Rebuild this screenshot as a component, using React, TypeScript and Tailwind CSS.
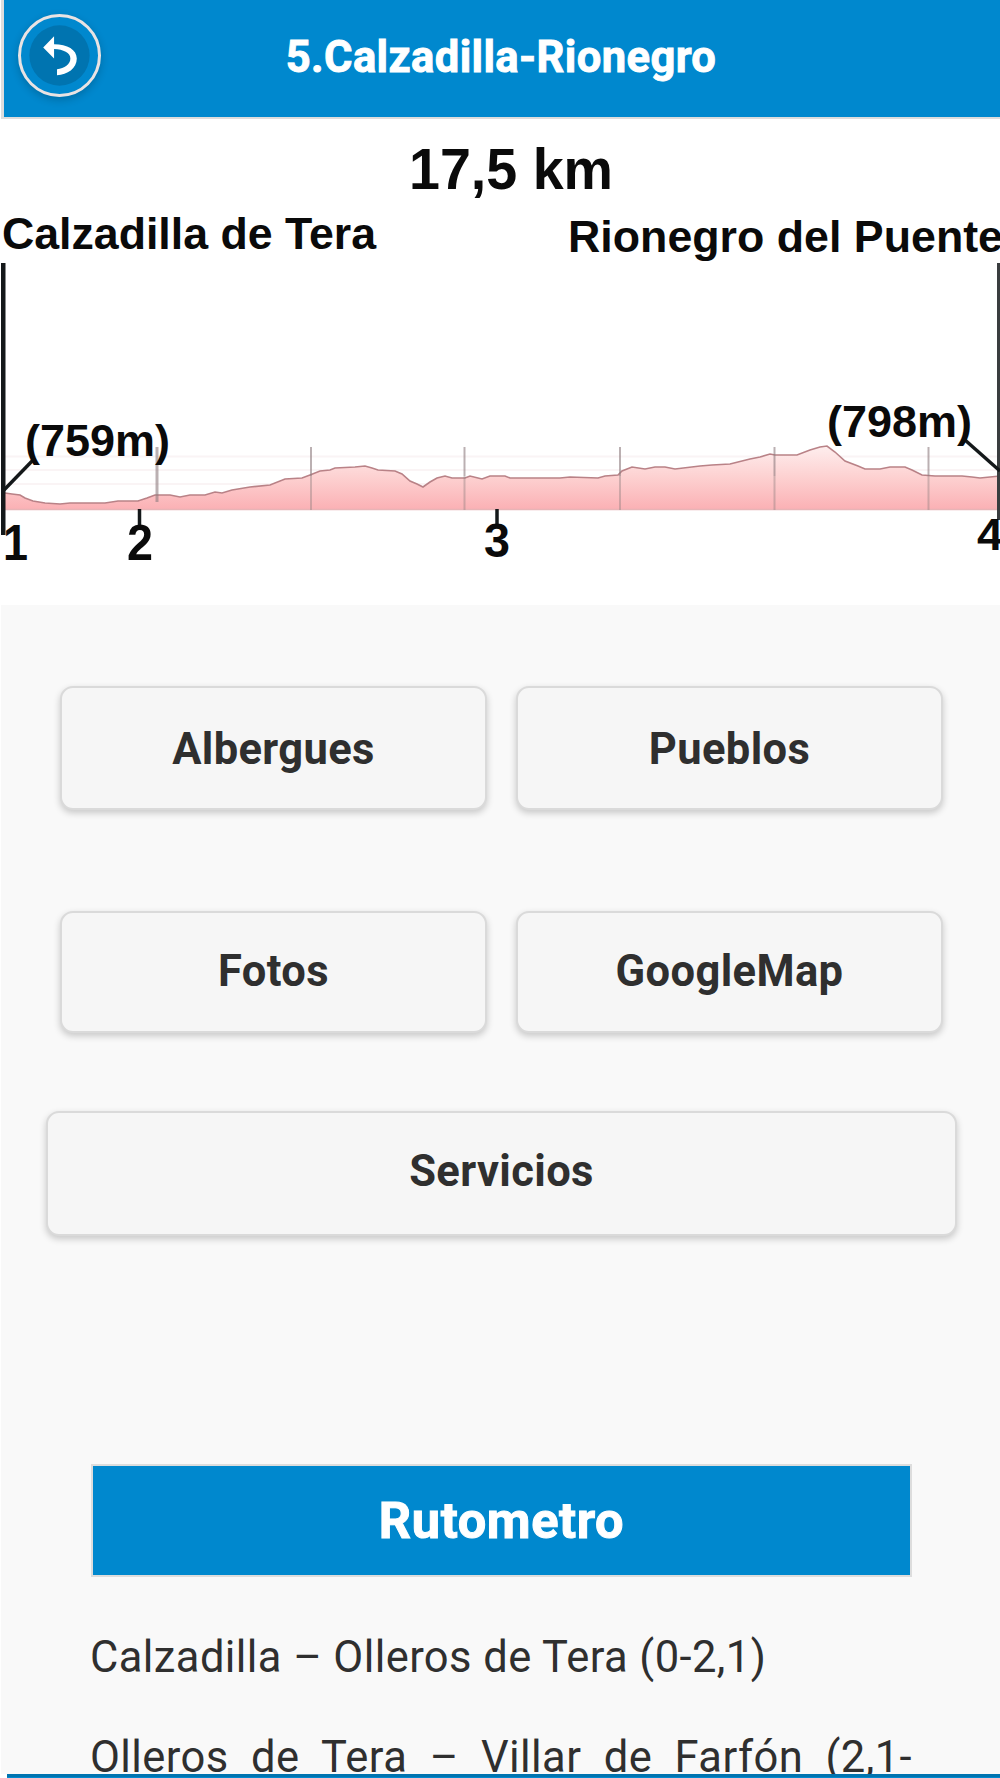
import React from "react";

const profile =
  "5,493 12,494 20,495 25,498 33,501 45,503 60,504 70,503 105,503 118,501 138,501 147,498 155,495 170,495 180,497 190,495 205,495 215,492 222,493 232,490 250,487 270,485 285,479 302,478 310,475 320,471 330,470 335,468 355,467 365,466 372,468 378,470 395,471 402,474 410,481 417,484 423,487 430,482 437,478 445,476 452,478 465,478 470,476 482,479 490,476 505,476 510,478 560,478 570,477 598,478 605,476 618,475 622,471 632,467 645,469 655,467 665,467 675,469 700,466 712,465 730,464 750,459 760,457 770,454 775,455 797,455 810,450 820,447 827,446 835,452 845,461 858,466 865,469 880,469 890,467 905,467 912,470 922,475 935,476 962,476 972,477 980,478 990,477 1000,476";

const kmLines = [311, 464.5, 620, 774.5, 928.5];
const levels = [456.5, 470, 484];

function BackIcon() {
  return (
    <svg viewBox="0 0 84 84" className="-m-[3px] size-[83px]">
      <circle cx="42" cy="42" r="30.5" fill="#0074b0" />
      <path
        d="M25.500 34 L36.500 22.500 V30.500 C50 30.500 59.500 36 59.500 45 C59.500 55 50 61.500 39.500 62 V56 C47 55 53 51 53 45 C53 39 46 36 36.500 35.500 V45 Z"
        fill="#fff"
      />
    </svg>
  );
}

function ElevationChart() {
  return (
    <svg
      viewBox="0 119 1000 486"
      className="block h-[486px] w-full bg-white"
      fontFamily="'Liberation Sans', Arial, sans-serif"
      fontWeight="bold"
      fill="#0a0a0a"
    >
      <defs>
        <linearGradient id="slope" gradientUnits="userSpaceOnUse" x1="0" y1="446" x2="0" y2="510">
          <stop offset="0" stopColor="#feeeee" />
          <stop offset="0.5" stopColor="#fdd0d0" />
          <stop offset="1" stopColor="#fbb0b4" />
        </linearGradient>
      </defs>

      {levels.map((y) => (
        <line key={y} x1="5" x2="1000" y1={y} y2={y} stroke="#faf4f5" strokeWidth="2" />
      ))}
      <polygon points={`5,510 ${profile} 1000,510`} fill="url(#slope)" />
      <polyline points={profile} fill="none" stroke="#b98287" strokeWidth="1.6" />
      <line x1="5" x2="1000" y1="509.500" y2="509.500" stroke="#e8b4b6" strokeWidth="1.5" />
      <line x1="157" x2="157" y1="447" y2="502" stroke="#8d7c7e" strokeOpacity="0.6" strokeWidth="3" />
      {kmLines.map((x) => (
        <g key={x} stroke="#8d7c7e" strokeWidth="2">
          <line x1={x} x2={x} y1="447" y2="476" strokeOpacity="0.6" />
          <line x1={x} x2={x} y1="476" y2="510" strokeOpacity="0.4" />
        </g>
      ))}

      {/* marcas de inicio y final */}
      <rect x="1" y="263" width="4.500" height="272" fill="#14181a" />
      <rect x="997" y="263" width="3" height="257" fill="#3a3d3f" />
      <g stroke="#14181a" strokeWidth="3.500">
        <line x1="4" y1="490" x2="35" y2="458" />
        <line x1="965" y1="440" x2="1000" y2="471" />
        <line x1="139.500" y1="509" x2="139.500" y2="527" />
        <line x1="497" y1="509" x2="497" y2="526" />
      </g>

      <text x="409" y="188.500" fontSize="58" textLength="204" lengthAdjust="spacingAndGlyphs">17,5 km</text>
      <text x="2" y="248.500" fontSize="44.500" textLength="374" lengthAdjust="spacingAndGlyphs">Calzadilla de Tera</text>
      <text x="568" y="252" fontSize="44.500" textLength="435" lengthAdjust="spacingAndGlyphs">Rionegro del Puente</text>
      <text x="25" y="455.500" fontSize="44" textLength="145" lengthAdjust="spacingAndGlyphs">(759m)</text>
      <text x="827" y="437" fontSize="44" textLength="145" lengthAdjust="spacingAndGlyphs">(798m)</text>
      <text x="3" y="560" fontSize="50" textLength="25" lengthAdjust="spacingAndGlyphs">1</text>
      <text x="127" y="560" fontSize="50" textLength="26" lengthAdjust="spacingAndGlyphs">2</text>
      <text x="484" y="557" fontSize="49" textLength="26" lengthAdjust="spacingAndGlyphs">3</text>
      <text x="977" y="550" fontSize="44" textLength="26" lengthAdjust="spacingAndGlyphs">4</text>
    </svg>
  );
}

function MenuButton({ label, className }: { label: string; className: string }) {
  return (
    <button
      className={`flex items-center justify-center rounded-[13px] border-2 border-[#dadada] bg-[#f6f6f6] text-[43.500px] leading-none font-bold tracking-[0.38px] text-[#2f2f2f] shadow-[0_3px_7px_rgba(0,0,0,0.2)] ${className}`}
    >
      {label}
    </button>
  );
}

export default function App() {
  return (
    <div className="flex h-[1778px] w-[1000px] flex-col overflow-hidden bg-white pl-px font-[Roboto,sans-serif]">
      <header className="grid h-[119px] shrink-0 grid-cols-[96px_1fr_96px] border-b-2 border-l-[3px] border-[#dddddd] bg-[#0088ce]">
        <button className="mt-[14px] ml-[14px] size-[83px] rounded-full border-[3px] border-[#e9e3e3] shadow-[0_3px_8px_rgba(0,0,0,0.2)]">
          <BackIcon />
        </button>
        <h1 className="-ml-0.5 pt-8 text-center text-[43.500px] leading-[52px] font-bold tracking-[0.4px] whitespace-nowrap text-white [-webkit-text-stroke:0.9px_white]">
          5.Calzadilla-Rionegro
        </h1>
      </header>

      <div className="-ml-px h-[486px] shrink-0">
        <ElevationChart />
      </div>

      <main className="flex-1 overflow-hidden bg-[#f9f9f9]">
        <div className="mt-[81px] ml-[59px] grid w-[883px] grid-cols-2 gap-x-[29px]">
          <MenuButton label="Albergues" className="h-[124px] pt-[3px]" />
          <MenuButton label="Pueblos" className="h-[124px] pt-[3px]" />
          <MenuButton label="Fotos" className="mt-[101px] h-[122px]" />
          <MenuButton label="GoogleMap" className="mt-[101px] h-[122px]" />
        </div>
        <div className="mt-[78px] ml-[45px] w-[911px]">
          <MenuButton label="Servicios" className="h-[125px] w-full pb-[3px]" />
        </div>

        <section className="mt-[228px] ml-[90px] w-[821px]">
          <h2 className="flex h-[113px] items-center justify-center border-2 border-[#dddddd] bg-[#0088ce] pt-[2px] text-[50.500px] leading-none font-bold tracking-[0.6px] text-white [-webkit-text-stroke:1px_white]">
            Rutometro
          </h2>
          <p className="mt-[55px] -ml-px text-[43.500px] leading-[52px] tracking-[0.42px] text-[#2f2f2f]">
            Calzadilla – Olleros de Tera (0-2,1)
          </p>
          <p className="mt-[48px] -ml-px text-justify text-[43.500px] leading-[52px] tracking-[0.42px] text-[#2f2f2f] [text-align-last:justify]">
            Olleros de Tera – Villar de Farfón (2,1-
          </p>
        </section>
      </main>

      <footer className="ml-[6px] h-1 shrink-0 border-t-[3px] border-[#0074b0] bg-[#0088ce]" />
    </div>
  );
}
